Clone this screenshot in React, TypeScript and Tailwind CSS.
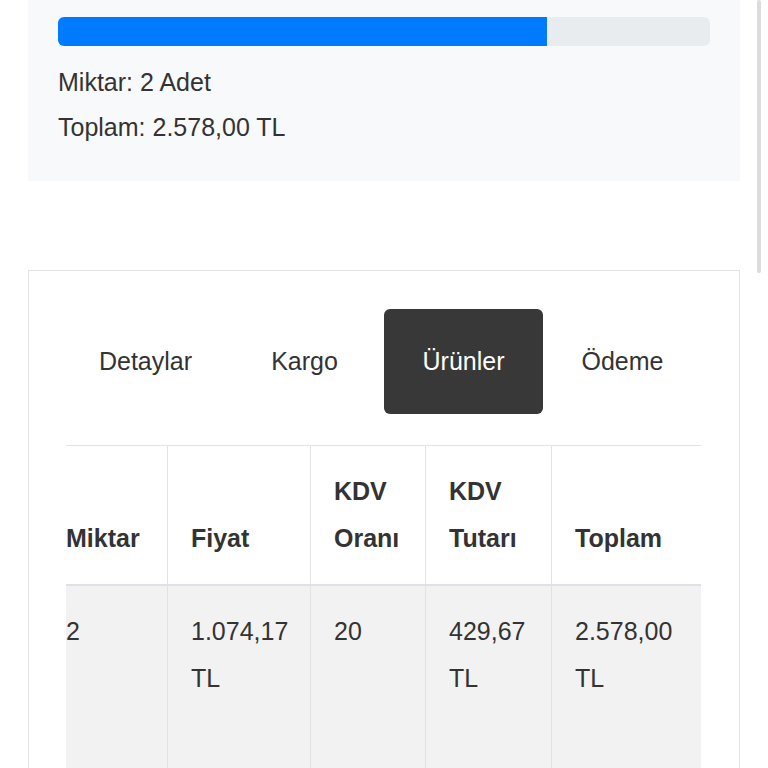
import React from "react";

const tabs = ["Detaylar", "Kargo", "Ürünler", "Ödeme"];

const columns = [
  { label: ["Miktar"], w: "w-[124px]" },
  { label: ["Fiyat"], w: "w-[143px]" },
  { label: ["KDV", "Oranı"], w: "w-[115px]" },
  { label: ["KDV", "Tutarı"], w: "w-[126px]" },
  { label: ["Toplam"], w: "w-[150px]" },
];

const row = ["2", "1.074,17 TL", "20", "429,67 TL", "2.578,00 TL"];

export default function App() {
  const [active, setActive] = React.useState("Ürünler");
  const progress = 75;

  return (
    <div className="relative h-[768px] overflow-hidden bg-white font-['Liberation_Sans',Arial,sans-serif] text-[25px] leading-[47px] text-[#333]">
      {/* order summary */}
      <div className="mx-[28px] bg-[#f8f9fa] px-[30px] pt-[17px] pb-[31px]">
        <div className="h-[29px] w-full overflow-hidden rounded-[6px] bg-[#e9ecef]">
          <div className="h-full bg-[#007bff]" style={{ width: `${progress}%` }} />
        </div>
        <p className="mt-[14px] leading-[45px]">Miktar: 2 Adet</p>
        <p className="leading-[45px]">Toplam: 2.578,00 TL</p>
      </div>

      {/* tabs card */}
      <div className="mx-[28px] mt-[89px] border border-[#e3e3e3] px-[37px] pt-[38px]">
        <div className="flex">
          {tabs.map((t) => (
            <button
              key={t}
              onClick={() => setActive(t)}
              className={
                "flex h-[105px] w-[159px] items-center justify-center rounded-[6px] " +
                (active === t ? "bg-[#383838] text-white" : "text-[#333]")
              }
            >
              {t}
            </button>
          ))}
        </div>

        <div className="mt-[31px] w-[635px] overflow-hidden">
          <table className="-ml-[24px] w-[659px] table-fixed border-collapse">
            <thead>
              <tr className="border-t border-[#e3e3e3]">
                {columns.map((c, i) => (
                  <th
                    key={i}
                    className={
                      (i === 0 ? "w-[125px]" : c.w) +
                      " border-b-2 border-b-[#dee2e6] border-x border-x-[#e3e3e3] px-[23px] py-[22px] text-left align-bottom font-bold"
                    }
                  >
                    {c.label.map((l) => (
                      <div key={l}>{l}</div>
                    ))}
                  </th>
                ))}
              </tr>
            </thead>
            <tbody>
              <tr className="bg-[#f2f2f2]">
                {row.map((v, i) => (
                  <td
                    key={i}
                    className="h-[200px] border-x border-[#e3e3e3] px-[23px] py-[22px] align-top"
                  >
                    {v}
                  </td>
                ))}
              </tr>
            </tbody>
          </table>
        </div>
      </div>

      {/* scrollbar thumb */}
      <div className="absolute right-[7px] top-0 h-[273px] w-[4px] rounded-full bg-[#dcdcdc]" />
    </div>
  );
}
